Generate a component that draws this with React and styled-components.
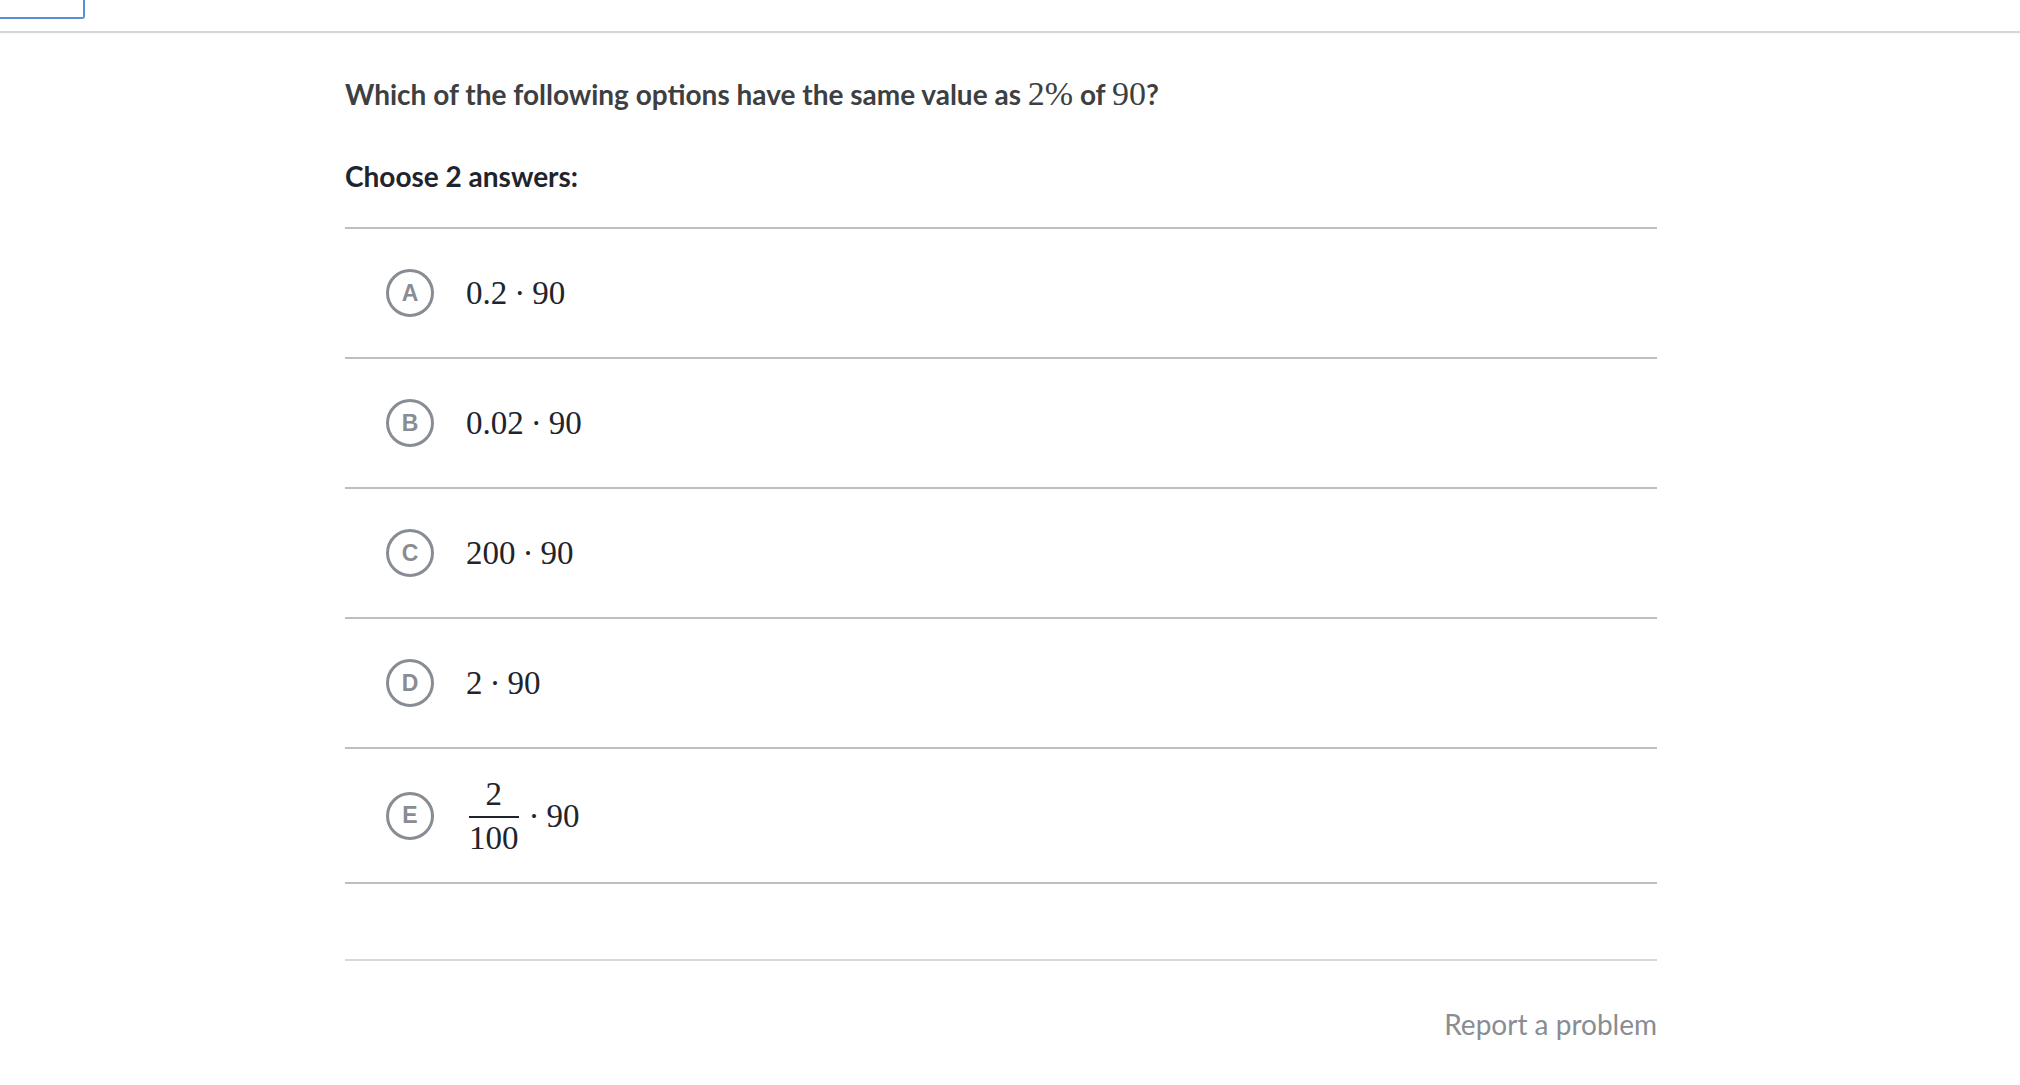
import React from 'react'
import styled, { createGlobalStyle } from 'styled-components'

const GlobalStyle = createGlobalStyle`
  html, body {
    margin: 0;
    padding: 0;
    background: #ffffff;
  }

  body {
    font-family: Lato, "Open Sans", "Liberation Sans", sans-serif;
    color: #21242c;
  }
`

const choices = [
  { letter: 'A', parts: ['0.2', '90'] },
  { letter: 'B', parts: ['0.02', '90'] },
  { letter: 'C', parts: ['200', '90'] },
  { letter: 'D', parts: ['2', '90'] },
  { letter: 'E', fraction: ['2', '100'], parts: ['90'] },
]

function Choice({ choice }) {
  return (
    <StyledChoice>
      <LetterCircle>{choice.letter}</LetterCircle>
      <MathLine>
        {choice.fraction && (
          <Fraction>
            <span className="num">{choice.fraction[0]}</span>
            <span className="bar" />
            <span className="den">{choice.fraction[1]}</span>
          </Fraction>
        )}
        {choice.parts.map((part, i) => (
          <React.Fragment key={i}>
            {(i > 0 || choice.fraction) && <Dot>·</Dot>}
            <span>{part}</span>
          </React.Fragment>
        ))}
      </MathLine>
    </StyledChoice>
  )
}

function App() {
  return (
    <>
      <GlobalStyle />
      <Header>
        <SkipLink />
      </Header>
      <Content>
        <Question>
          Which of the following options have the same value as{' '}
          <InlineMath>2%</InlineMath> of <InlineMath>90</InlineMath>?
        </Question>
        <Instructions>Choose 2 answers:</Instructions>
        <ChoiceList>
          {choices.map((choice) => (
            <Choice key={choice.letter} choice={choice} />
          ))}
        </ChoiceList>
        <Footer>
          <ReportLink>Report a problem</ReportLink>
        </Footer>
      </Content>
    </>
  )
}

const Header = styled.div`
  height: 31px;
  border-bottom: 2px solid #d6d6d6;
  box-shadow: 0 1px 3px rgba(0, 0, 0, 0.04);
`

const SkipLink = styled.div`
  width: 83px;
  height: 17px;
  border-right: 2px solid #5890d6;
  border-bottom: 2px solid #5890d6;
  border-bottom-right-radius: 3px;
`

const Content = styled.div`
  width: 1312px;
  margin-left: 345px;
  padding-top: 41px;
`

const Question = styled.div`
  font-size: 28px;
  line-height: 40px;
  font-weight: 700;
  color: #3d3f42;
  margin-bottom: 42px;
`

const InlineMath = styled.span`
  font-family: "Liberation Serif", "DejaVu Serif", serif;
  font-weight: 400;
  font-size: 34px;
  line-height: 1;
  color: #3d3f42;
`

const Instructions = styled.div`
  font-size: 28px;
  line-height: 40px;
  font-weight: 700;
  color: #21242c;
  margin-bottom: 31px;
`

const ChoiceList = styled.div`
  border-top: 2px solid #bcbfc2;
  border-bottom: 2px solid #bcbfc2;
`

const StyledChoice = styled.div`
  display: flex;
  align-items: center;
  box-sizing: border-box;
  min-height: 130px;
  padding: 29px 0 29px 41px;
  border-bottom: 2px solid #bcbfc2;

  &:last-child {
    border-bottom: none;
    min-height: 133px;
  }
`

const LetterCircle = styled.div`
  box-sizing: border-box;
  width: 48px;
  height: 48px;
  flex-shrink: 0;
  border: 3px solid #888d93;
  border-radius: 50%;
  display: flex;
  align-items: center;
  justify-content: center;
  font-family: "Liberation Sans", Arial, sans-serif;
  font-weight: 700;
  font-size: 23px;
  line-height: 1;
  color: #888d93;
  margin-right: 32px;
`

const MathLine = styled.div`
  display: flex;
  align-items: center;
  font-family: "Liberation Serif", "DejaVu Serif", serif;
  font-size: 33px;
  line-height: 40px;
  color: #21242c;
`

const Dot = styled.span`
  margin: 0 7px;
`

const Fraction = styled.span`
  display: inline-flex;
  flex-direction: column;
  align-items: center;
  padding: 0 3px;

  .num,
  .den {
    line-height: 30px;
  }

  .bar {
    align-self: stretch;
    height: 2px;
    background: #21242c;
    margin: 7px 0 5px;
  }
`

const Footer = styled.div`
  display: flex;
  justify-content: flex-end;
  margin-top: 75px;
  padding-top: 43px;
  border-top: 2px solid #d6d8da;
`

const ReportLink = styled.a`
  font-size: 28px;
  line-height: 40px;
  font-weight: 400;
  color: #888d93;
  cursor: pointer;
`

export default App
